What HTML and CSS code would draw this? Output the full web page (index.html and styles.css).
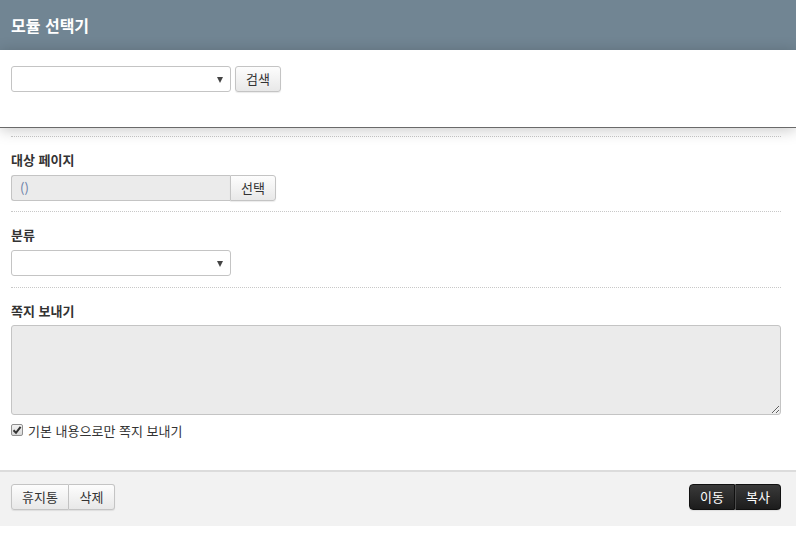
FILE: index.html
```html
<!DOCTYPE html>
<html lang="ko">
<head>
<meta charset="utf-8">
<link rel="stylesheet" href="styles.css">
</head>
<body>
<div class="header"><h1 class="title">모듈 선택기</h1></div>
<div class="top">
  <div class="select"><span class="arrow"></span></div>
  <button class="btn w46">검색</button>
</div>
<div class="content">
  <div class="section s1">
    <div class="label">대상 페이지</div>
    <div class="group">
      <div class="input">()</div>
      <button class="btn btn-right">선택</button>
    </div>
  </div>
  <div class="section s2">
    <div class="label">분류</div>
    <div class="select"><span class="arrow"></span></div>
  </div>
  <div class="section s3">
    <div class="label">쪽지 보내기</div>
    <textarea class="textarea"></textarea>
    <label class="check">
      <span class="box"><svg width="10" height="10" viewBox="0 0 10 10"><path d="M1.5 5.2 L4 7.8 L8.6 1.8" fill="none" stroke="#333" stroke-width="2"/></svg></span>
      <span>기본 내용으로만 쪽지 보내기</span>
    </label>
  </div>
</div>
<div class="footer">
  <div class="btngroup">
    <button class="btn gl w58">휴지통</button><button class="btn gr w46">삭제</button>
  </div>
  <div class="btngroup">
    <button class="btn dark gl w46">이동</button><button class="btn dark gr w46">복사</button>
  </div>
</div>
</body>
</html>
```
FILE: styles.css
```css
* { box-sizing: border-box; }
html, body { margin: 0; padding: 0; background: #fff; }
body {
  font-family: "Noto Sans CJK KR", "Noto Sans", sans-serif;
  font-size: 13px;
  color: #333;
  width: 796px;
  height: 535px;
  overflow: hidden;
}
.header {
  height: 50px;
  background: #718593;
  padding: 0 11px;
}
.title {
  margin: 0;
  font-size: 16px;
  font-weight: bold;
  color: #fff;
  line-height: 50px;
}
.top {
  height: 78px;
  padding: 16px 11px 0;
  display: flex;
  align-items: flex-start;
  gap: 4px;
  border-bottom: 1px solid #6a6a6a;
  box-shadow: 0 2px 14px rgba(0, 0, 0, 0.22);
  position: relative;
  z-index: 1;
}
.select {
  width: 220px;
  height: 26px;
  border: 1px solid #c4c4c4;
  border-radius: 3px;
  background: #fff;
  position: relative;
}
.arrow {
  position: absolute;
  right: 7px;
  top: 10px;
  width: 0;
  height: 0;
  border-left: 3.5px solid transparent;
  border-right: 3.5px solid transparent;
  border-top: 6px solid #444;
}
.btn {
  height: 26px;
  padding: 0;
  text-align: center;
  font-family: inherit;
  font-size: 13px;
  color: #333;
  border: 1px solid #c4c4c4;
  border-radius: 3px;
  background: linear-gradient(#fdfdfd, #e8e8e8);
  box-shadow: 0 1px 1px rgba(0,0,0,0.08);
  line-height: 24px;
  cursor: pointer;
}
.w46 { width: 46px; }
.w58 { width: 58px; }
.content {
  padding: 8px 15px 0 11px;
}
.section {
  border-top: 1px dotted #c8c8c8;
  padding-top: 13px;
}
.label {
  font-weight: bold;
  line-height: 20px;
  margin-bottom: 5px;
  color: #333;
}
.s1 { height: 75px; }
.s2 { height: 76px; }
.s3 .label { margin-bottom: 4px; }
.group { display: flex; }
.input {
  width: 219px;
  height: 26px;
  border: 1px solid #c4c4c4;
  border-right: none;
  border-radius: 3px 0 0 3px;
  background: #ebebeb;
  color: #6a7fa8;
  line-height: 24px;
  padding-left: 8px;
}
.btn-right {
  width: 46px;
  border-radius: 0 3px 3px 0;
}
.textarea {
  display: block;
  width: 770px;
  height: 90px;
  border: 1px solid #c4c4c4;
  border-radius: 3px;
  background: #ebebeb;
  margin: 0;
  font-family: inherit;
}
.check {
  display: flex;
  align-items: center;
  gap: 5px;
  height: 20px;
  margin-top: 5px;
  color: #333;
}
.box {
  width: 12px;
  height: 12px;
  border: 1px solid #8f8f8f;
  border-radius: 2px;
  background: linear-gradient(#f4f4f4, #d8d8d8);
  display: flex;
  align-items: center;
  justify-content: center;
}
.box svg { display: block; }
.footer {
  margin-top: 30px;
  height: 56px;
  border-top: 2px solid #dcdcdc;
  background: #f2f2f2;
  padding: 12px 15px 0 11px;
  display: flex;
  justify-content: space-between;
  align-items: flex-start;
}
.btngroup { display: flex; }
.gl { border-radius: 3px 0 0 3px; }
.gr { border-radius: 0 3px 3px 0; border-left: none; }
.btn.dark {
  color: #fff;
  border-color: #111;
  background: linear-gradient(#3a3a3a, #1c1c1c);
}
.btn.dark.gl { border-radius: 4px 0 0 4px; }
.btn.dark.gr { border-left: 1px solid #4a4a4a; border-radius: 0 4px 4px 0; }
```
